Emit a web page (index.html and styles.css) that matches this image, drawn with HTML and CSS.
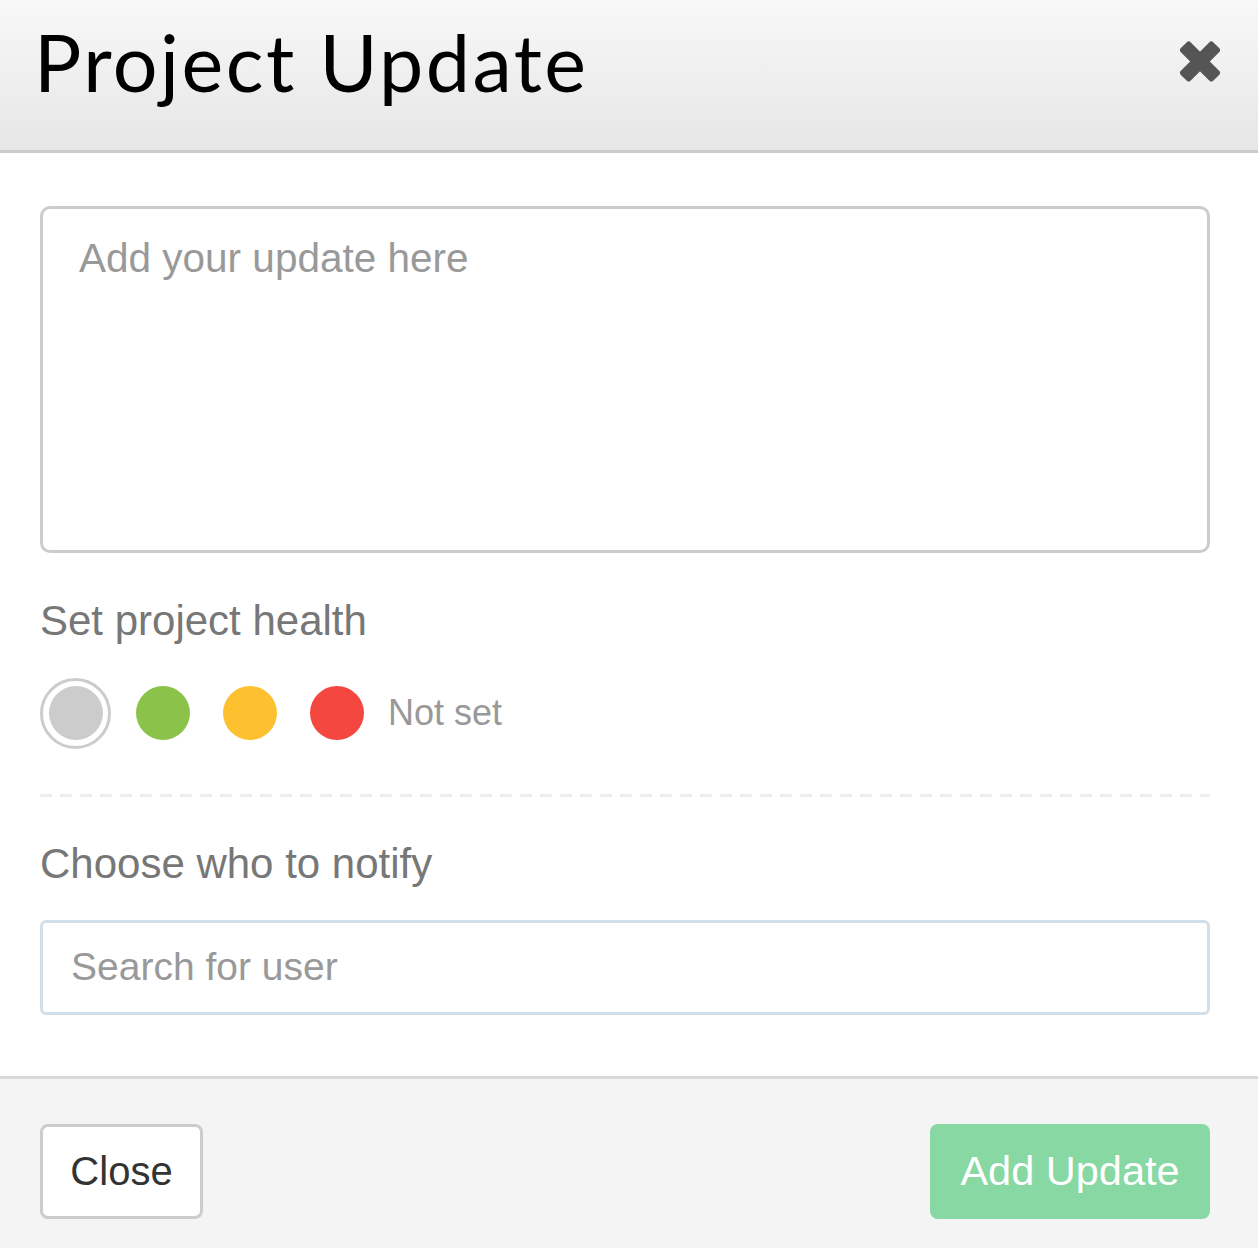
FILE: index.html
```html
<!DOCTYPE html>
<html lang="en">
<head>
<meta charset="utf-8">
<title>Project Update</title>
<link rel="stylesheet" href="styles.css">
</head>
<body>
<div class="modal">
  <header class="modal-header">
    <h1 class="modal-title">Project Update</h1>
    <button class="close-x" aria-label="Close">
      <svg width="42" height="43" viewBox="0 0 42 43" aria-hidden="true">
        <g fill="#555" transform="translate(21 21.5)">
          <rect x="-23" y="-7" width="46" height="14" rx="3" transform="rotate(45)"/>
          <rect x="-23" y="-7" width="46" height="14" rx="3" transform="rotate(-45)"/>
        </g>
      </svg>
    </button>
  </header>
  <div class="modal-body">
    <textarea class="update-text" placeholder="Add your update here"></textarea>
    <h2 class="section-label label-health">Set project health</h2>
    <div class="health-row">
      <span class="health-opt selected"><span class="dot dot-grey"></span></span>
      <span class="health-opt"><span class="dot dot-green"></span></span>
      <span class="health-opt"><span class="dot dot-yellow"></span></span>
      <span class="health-opt"><span class="dot dot-red"></span></span>
      <span class="health-status">Not set</span>
    </div>
    <div class="divider"></div>
    <h2 class="section-label label-notify">Choose who to notify</h2>
    <input class="search" type="text" placeholder="Search for user">
  </div>
  <footer class="modal-footer">
    <button class="btn btn-close">Close</button>
    <button class="btn btn-add">Add Update</button>
  </footer>
</div>
</body>
</html>
```

FILE: styles.css
```css
* { box-sizing: border-box; }
html, body { margin: 0; padding: 0; background: #fff; }
body { font-family: "Liberation Sans", Arial, sans-serif; }

.modal { width: 1258px; }

.modal-header {
  height: 153px;
  display: flex;
  justify-content: space-between;
  align-items: flex-start;
  padding: 22px 37px 0 34px;
  background: linear-gradient(#f8f8f8, #e6e6e6);
  border-bottom: 3px solid #cccccc;
}
.modal-title {
  margin: 0;
  font-family: Lato, "Liberation Sans", sans-serif;
  font-weight: 400;
  font-size: 79px;
  line-height: 79px;
  letter-spacing: 2.5px;
  color: #000;
}
.close-x {
  margin-top: 18px;
  padding: 0;
  border: 0;
  background: none;
  display: block;
  line-height: 0;
}

.modal-body {
  padding: 53px 48px 61px 40px;
}
.update-text {
  display: block;
  width: 100%;
  height: 347px;
  margin: 0;
  border: 3px solid #cccccc;
  border-radius: 10px;
  padding: 24px 36px;
  font-family: "Liberation Sans", Arial, sans-serif;
  font-size: 40.5px;
  line-height: 50px;
  resize: none;
  outline: none;
}
.update-text::placeholder { color: #999; }

.section-label {
  margin: 0;
  font-weight: 400;
  font-size: 42px;
  line-height: 50px;
  color: #777;
}
.label-health { margin-top: 42.5px; }
.label-notify { margin-top: 42px; }

.health-row {
  margin-top: 32px;
  display: flex;
  align-items: center;
  gap: 16px;
  height: 71px;
}
.health-opt {
  width: 71px;
  height: 71px;
  border-radius: 50%;
  border: 3px solid transparent;
  display: flex;
  align-items: center;
  justify-content: center;
  flex: none;
}
.health-opt.selected { border-color: #cccccc; }
.dot {
  width: 54px;
  height: 54px;
  border-radius: 50%;
  display: block;
}
.dot-grey { background: #cccccc; }
.dot-green { background: #8bc34a; }
.dot-yellow { background: #fdc02f; }
.dot-red { background: #f44740; }
.health-status {
  font-size: 36px;
  color: #999;
}

.divider {
  margin-top: 45px;
  height: 3px;
  background: repeating-linear-gradient(90deg, #eeeeee 0 12px, transparent 12px 20px);
}

.search {
  display: block;
  width: 100%;
  height: 95px;
  margin: 31px 0 0;
  border: 3px solid #d3dfe8;
  border-radius: 6px;
  padding: 0 28px;
  font-family: "Liberation Sans", Arial, sans-serif;
  font-size: 39px;
  outline: none;
}
.search::placeholder { color: #999; }

.modal-footer {
  height: 172px;
  border-top: 3px solid #d9d9d9;
  background: #f4f4f4;
  padding: 45px 48px 29px 40px;
  display: flex;
  justify-content: space-between;
  align-items: flex-start;
}
.btn {
  height: 95px;
  border-radius: 8px;
  font-family: "Liberation Sans", Arial, sans-serif;
  font-size: 40px;
  cursor: pointer;
  padding: 0;
}
.btn-close {
  width: 163px;
  background: #fff;
  border: 3px solid #cccccc;
  color: #333;
}
.btn-add {
  width: 280px;
  background: #88d8a3;
  border: 0;
  color: #fff;
  font-size: 41.5px;
}
```
